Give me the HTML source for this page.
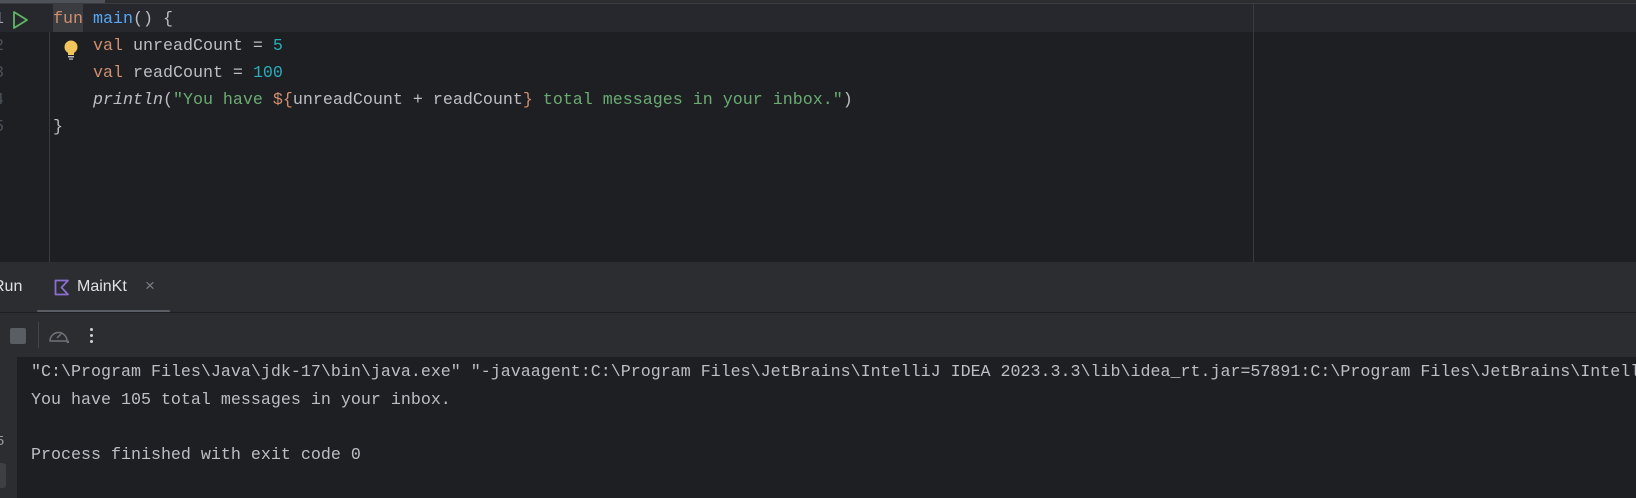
<!DOCTYPE html>
<html><head><meta charset="utf-8"><style>
*{margin:0;padding:0;box-sizing:border-box}
body{width:1636px;height:498px;overflow:hidden;background:#1e1f22;position:relative;font-family:"Liberation Mono",monospace;font-size:16.67px;color:#bcbec4}
.a{position:absolute;white-space:pre}
.kw{color:#cf8e6d}.fn{color:#56a8f5}.num{color:#2aacb8}.str{color:#6aab73}.it{font-style:italic}
</style></head><body>
<div class="a" style="left:0;top:0;width:1636px;height:3px;background:#2b2d30"></div>
<div class="a" style="left:0;top:0;width:105px;height:4px;background:#4e5157;border-radius:0 0 2px 0"></div>
<div class="a" style="left:0;top:3px;width:1636px;height:1px;background:#393b40"></div>
<div class="a" style="left:0;top:4px;width:1636px;height:28px;background:#26282e"></div>
<div class="a" style="left:53px;top:4px;width:30px;height:28px;background:#3b3c3f"></div>
<div class="a" style="left:49px;top:32px;width:1px;height:230px;background:#393b40"></div>
<div class="a" style="left:1253px;top:4px;width:1px;height:258px;background:#393b40"></div>
<div class="a" style="left:-6px;top:10px;color:#a1a3ab">1</div>
<div class="a" style="left:-6px;top:37px;color:#4b5059">2</div>
<div class="a" style="left:-6px;top:64px;color:#4b5059">3</div>
<div class="a" style="left:-6px;top:91px;color:#4b5059">4</div>
<div class="a" style="left:-6px;top:118px;color:#4b5059">5</div>
<svg class="a" style="left:12px;top:10px" width="18" height="20" viewBox="0 0 18 20"><path d="M2 2 L15 10 L2 18 Z" fill="none" stroke="#5fb865" stroke-width="1.8" stroke-linejoin="round"/></svg>
<svg class="a" style="left:63px;top:40px" width="16" height="20" viewBox="0 0 16 20"><circle cx="8" cy="7" r="6.5" fill="#f2c55c"/><rect x="5" y="11" width="6" height="4" fill="#f2c55c"/><rect x="5" y="16" width="6" height="1.5" fill="#bcbec4"/><rect x="6" y="18.5" width="4" height="1.2" fill="#bcbec4"/></svg>
<div class="a" style="left:53px;top:10px"><span class="kw">fun</span> <span class="fn">main</span>() {</div>
<div class="a" style="left:53px;top:37px">    <span class="kw">val</span> unreadCount = <span class="num">5</span></div>
<div class="a" style="left:53px;top:64px">    <span class="kw">val</span> readCount = <span class="num">100</span></div>
<div class="a" style="left:53px;top:91px">    <span class="it">println</span>(<span class="str">"You have </span><span class="kw">${</span>unreadCount + readCount<span class="kw">}</span><span class="str"> total messages in your inbox."</span>)</div>
<div class="a" style="left:53px;top:118px">}</div>
<div class="a" style="left:0;top:262px;width:1636px;height:95px;background:#2b2d30"></div>
<div class="a" style="left:-7px;top:278px;font-family:'Liberation Sans',sans-serif;font-size:16px;color:#dfe1e5">Run</div>
<svg class="a" style="left:54px;top:279px" width="16" height="17" viewBox="0 0 16 17"><path d="M1.5 1.5 H14 L7.5 8.5 L14 15.5 H1.5 Z" fill="none" stroke="#8a6fd1" stroke-width="1.8" stroke-linejoin="round"/></svg>
<div class="a" style="left:77px;top:278px;font-family:'Liberation Sans',sans-serif;font-size:16px;color:#dfe1e5">MainKt</div>
<div class="a" style="left:145px;top:276px;font-family:'Liberation Sans',sans-serif;font-size:17px;color:#7c7f86">×</div>
<div class="a" style="left:37px;top:310px;width:133px;height:3px;background:#5a5d63;border-radius:2px"></div>
<div class="a" style="left:0;top:312px;width:1636px;height:1px;background:#1e1f22"></div>
<div class="a" style="left:10px;top:328px;width:16px;height:16px;background:#5a5d63;border-radius:2px"></div>
<div class="a" style="left:38px;top:322px;width:1px;height:26px;background:#43454a"></div>
<svg class="a" style="left:48px;top:326px" width="22" height="20" viewBox="0 0 22 20"><path d="M2 15 A8.5 8.5 0 1 1 19 15 Z" fill="none" stroke="#6f737a" stroke-width="1.5" stroke-linejoin="round"/><path d="M9 12 L13 8" stroke="#6f737a" stroke-width="1.5"/><path d="M18 17 L21 17 L21 14 Z" fill="#6f737a"/></svg>
<div class="a" style="left:90px;top:328px;width:3px;height:3px;background:#ced0d6;border-radius:2px"></div>
<div class="a" style="left:90px;top:334px;width:3px;height:3px;background:#ced0d6;border-radius:2px"></div>
<div class="a" style="left:90px;top:340px;width:3px;height:3px;background:#ced0d6;border-radius:2px"></div>
<div class="a" style="left:0;top:357px;width:17px;height:141px;background:#2b2d30"></div>
<div class="a" style="left:-4px;top:434px;font-size:14px;color:#9a9da3">5</div>
<div class="a" style="left:-4px;top:463px;width:10px;height:25px;background:#3d3f43;border-radius:3px"></div>
<div class="a" style="left:31px;top:363px;width:1605px;overflow:hidden">"C:\Program Files\Java\jdk-17\bin\java.exe" "-javaagent:C:\Program Files\JetBrains\IntelliJ IDEA 2023.3.3\lib\idea_rt.jar=57891:C:\Program Files\JetBrains\IntelliJ IDEA</div>
<div class="a" style="left:31px;top:391px">You have 105 total messages in your inbox.</div>
<div class="a" style="left:31px;top:446px">Process finished with exit code 0</div>
</body></html>
